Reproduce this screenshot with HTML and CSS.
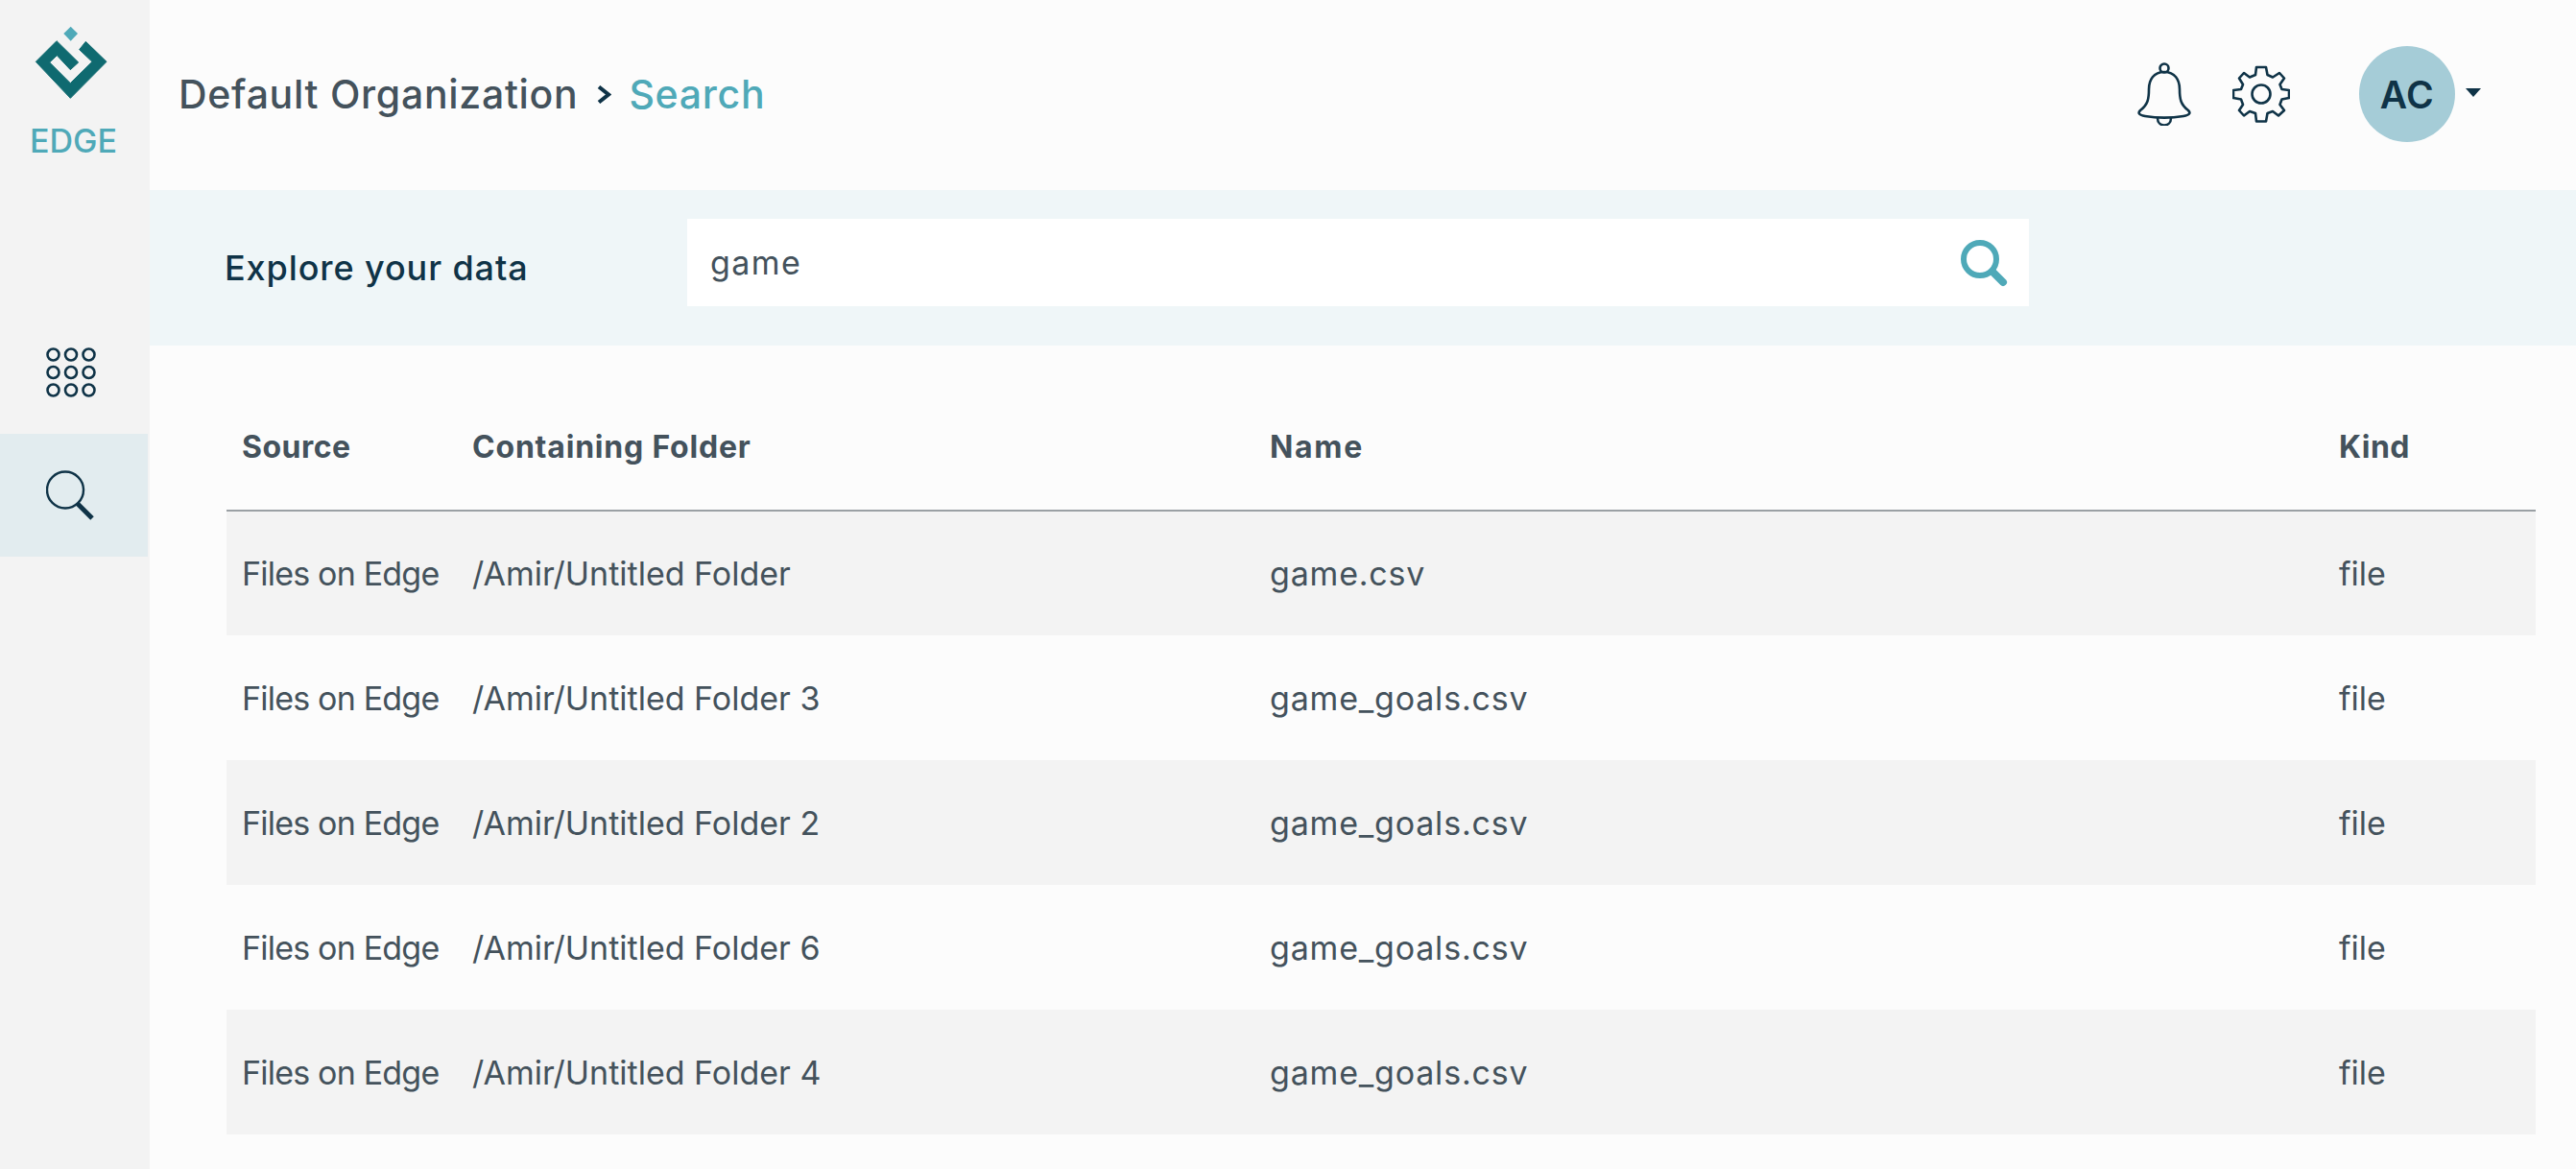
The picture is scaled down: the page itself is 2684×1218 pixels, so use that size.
FILE: index.html
```html
<!DOCTYPE html>
<html>
<head>
	<title>Edge - Search</title>
	<link rel="stylesheet" href="styles.css">
</head>
<body>
<div class="app">
	<aside class="sidebar">
		<div class="logo">
			<svg class="logo-mark" width="90" height="90" viewBox="0 0 270 270">
				<path fill="#4fa9b8" d="M131 23 L153 45 L131 68 L109 45 Z"/>
				<path fill="#0f6a70" stroke="#0f6a70" stroke-width="3" stroke-linejoin="round" d="M87 68 L155 135 L130 158 L88 113 L65 135 L130 200 L198 133 L158 95 L178 70 L243 133 L130 247 L22 133 Z"/>
			</svg>
			<div class="logo-text">EDGE</div>
		</div>
		<nav class="side-nav">
			<a class="side-item grid-item">
				<svg width="52" height="52" viewBox="0 0 52 52" fill="none" stroke="#0f3347" stroke-width="2.6">
					<circle cx="7.500" cy="7.500" r="6"/><circle cx="26" cy="7.500" r="6"/><circle cx="44.500" cy="7.500" r="6"/>
					<circle cx="7.500" cy="26" r="6"/><circle cx="26" cy="26" r="6"/><circle cx="44.500" cy="26" r="6"/>
					<circle cx="7.500" cy="44.500" r="6"/><circle cx="26" cy="44.500" r="6"/><circle cx="44.500" cy="44.500" r="6"/>
				</svg>
			</a>
			<a class="side-item active">
				<svg width="52" height="54" viewBox="0 0 52 54" fill="none" stroke="#0f3347">
					<circle cx="20" cy="20.500" r="19" stroke-width="2.400"/>
					<path d="M33 35 L48 50" stroke-width="5"/>
				</svg>
			</a>
		</nav>
	</aside>
	<main class="main">
		<header class="topbar">
			<div class="crumbs">
				<span class="crumb-org">Default Organization</span>
				<svg class="crumb-sep" width="15" height="19" viewBox="0 0 15 19" fill="none" stroke="#0f3347" stroke-width="4"><path d="M2 1.500 L12 9.500 L2 17.500"/></svg>
				<span class="crumb-page">Search</span>
			</div>
			<div class="top-actions">
				<svg width="56" height="66" viewBox="0 0 56 66" fill="none" stroke="#0f3347" stroke-width="2.6">
					<circle cx="28" cy="6" r="4.5"/>
					<path d="M28 10 C17 10 12 18 12 28 C12 38 11 44 3 50 C0 53 2 55 8 56 C20 58 36 58 48 56 C54 55 56 53 53 50 C45 44 44 38 44 28 C44 18 39 10 28 10 Z"/>
					<path d="M21 58 C21 68 35 68 35 58"/>
				</svg>
				<svg class="gear" width="60" height="60" viewBox="0 0 60 60" fill="none" stroke="#0f3347" stroke-width="2.6" stroke-linejoin="round">
					<circle cx="30" cy="30" r="9.5"/>
					<path d="M25 2 H35 L36.500 10 L42 12.500 L49 8 L54 13.500 L49.500 20 L51.500 25 L59 26 V34 L51.500 35.500 L49.500 41 L54 47 L48 52.500 L42 48 L36.500 50 L35 58.500 H25 L24 50 L18 48 L12 52.500 L7 47 L11 41 L9 35.500 L1 34 V26 L9 25 L11 20 L7 13.500 L12 8 L18 12.500 L24 10 Z"/>
				</svg>
				<div class="user">
					<div class="avatar">AC</div>
					<span class="caret"></span>
				</div>
			</div>
		</header>
		<section class="search-band">
			<h2 class="search-title">Explore your data</h2>
			<div class="search-box">
				<span class="search-value">game</span>
				<svg width="50" height="50" viewBox="0 0 50 50" fill="none" stroke="#4fa9b8" stroke-linecap="round">
					<circle cx="21" cy="21" r="17" stroke-width="6"/>
					<path d="M34 34 L45 45" stroke-width="8"/>
				</svg>
			</div>
		</section>
		<section class="results">
			<table class="result-table">
				<thead>
					<tr>
						<th class="col-source">Source</th>
						<th class="col-folder">Containing Folder</th>
						<th class="col-name">Name</th>
						<th>Kind</th>
					</tr>
				</thead>
				<tbody>
					<tr><td class="source-cell">Files on Edge</td><td>/Amir/Untitled Folder</td><td class="name-cell">game.csv</td><td>file</td></tr>
					<tr><td class="source-cell">Files on Edge</td><td>/Amir/Untitled Folder 3</td><td class="name-cell">game_goals.csv</td><td>file</td></tr>
					<tr><td class="source-cell">Files on Edge</td><td>/Amir/Untitled Folder 2</td><td class="name-cell">game_goals.csv</td><td>file</td></tr>
					<tr><td class="source-cell">Files on Edge</td><td>/Amir/Untitled Folder 6</td><td class="name-cell">game_goals.csv</td><td>file</td></tr>
					<tr><td class="source-cell">Files on Edge</td><td>/Amir/Untitled Folder 4</td><td class="name-cell">game_goals.csv</td><td>file</td></tr>
				</tbody>
			</table>
		</section>
	</main>
</div>
</body>
</html>
```

FILE: styles.css
```css
* {
	box-sizing: border-box;
}
html, body {
	margin: 0;
	height: 100%;
	overflow: hidden;
}
body {
	font-family: "Inter", "Liberation Sans", sans-serif;
	color: #44525c;
	background: #fcfcfc;
}
.app {
	display: flex;
	height: 1218px;
}

/* sidebar */
.sidebar {
	width: 156px;
	flex: none;
	background: #f3f3f3;
}
.logo {
	height: 198px;
	display: flex;
	flex-direction: column;
	align-items: center;
	padding-top: 20px;
}
.logo-mark {
	display: block;
	margin-right: 6px;
}
.logo-text {
	margin-top: 24px;
	margin-right: 3px;
	font-size: 34px;
	font-weight: 500;
	line-height: 26px;
	color: #4fa9b8;
}
.side-nav {
	padding-top: 124px;
}
.side-item {
	display: flex;
	align-items: center;
	justify-content: center;
	width: 154px;
	height: 130px;
	padding-right: 6px;
}
.grid-item svg {
	margin-top: 2px;
}
.side-item.active {
	height: 128px;
	background: #e2ecef;
}
.side-item.active svg {
	margin-top: 2px;
}

/* top bar */
.main {
	flex: 1;
	min-width: 0;
}
.topbar {
	height: 198px;
	display: flex;
	align-items: center;
	justify-content: space-between;
	padding: 0 99px 2px 30px;
}
.crumbs {
	display: flex;
	align-items: center;
	font-size: 41px;
	font-weight: 500;
	letter-spacing: 0.7px;
}
.crumb-sep {
	margin: 0 18px 0 20px;
}
.crumb-page {
	color: #4fa9b8;
}
.top-actions {
	display: flex;
	align-items: center;
}
.gear {
	margin-left: 43px;
}
.user {
	display: flex;
	align-items: center;
	margin-left: 72px;
}
.avatar {
	width: 100px;
	height: 100px;
	border-radius: 50%;
	background: #a5ccd7;
	color: #0f3347;
	font-size: 39px;
	font-weight: 600;
	letter-spacing: 0.5px;
	display: flex;
	align-items: center;
	justify-content: center;
}
.caret {
	margin: 0 0 4px 11px;
	border-left: 8px solid transparent;
	border-right: 8px solid transparent;
	border-top: 9px solid #0f3347;
}

/* search band */
.search-band {
	height: 162px;
	background: #eff6f8;
	display: flex;
	padding: 30px 0 0 78px;
}
.search-title {
	margin: 0;
	width: 482px;
	font-size: 36px;
	font-weight: 500;
	letter-spacing: 0.9px;
	line-height: 102px;
	color: #0f3347;
	white-space: nowrap;
}
.search-box {
	width: 1398px;
	height: 91px;
	background: #fff;
	display: flex;
	align-items: center;
	justify-content: space-between;
	padding: 0 22px 0 24px;
}
.search-value {
	font-size: 34px;
	letter-spacing: 1.4px;
}

/* results */
.results {
	padding: 40px 42px 0 80px;
}
.result-table {
	width: 100%;
	border-collapse: collapse;
	table-layout: fixed;
}
.result-table th {
	height: 132px;
	padding: 0 16px;
	text-align: left;
	font-size: 32px;
	font-weight: 700;
	letter-spacing: 0.5px;
	border-bottom: 2px solid #9aa0a4;
}
.result-table .col-folder {
	letter-spacing: 0.8px;
}
.result-table .col-name {
	letter-spacing: 1.7px;
}
.result-table td {
	height: 130px;
	padding: 0 16px;
	font-size: 34px;
	white-space: nowrap;
}
.result-table .source-cell {
	letter-spacing: -0.8px;
}
.result-table .name-cell {
	letter-spacing: 0.8px;
}
.result-table tbody tr:nth-child(odd) {
	background: #f3f3f3;
}
.col-source {
	width: 240px;
}
.col-folder {
	width: 831px;
}
.col-name {
	width: 1114px;
}
```
